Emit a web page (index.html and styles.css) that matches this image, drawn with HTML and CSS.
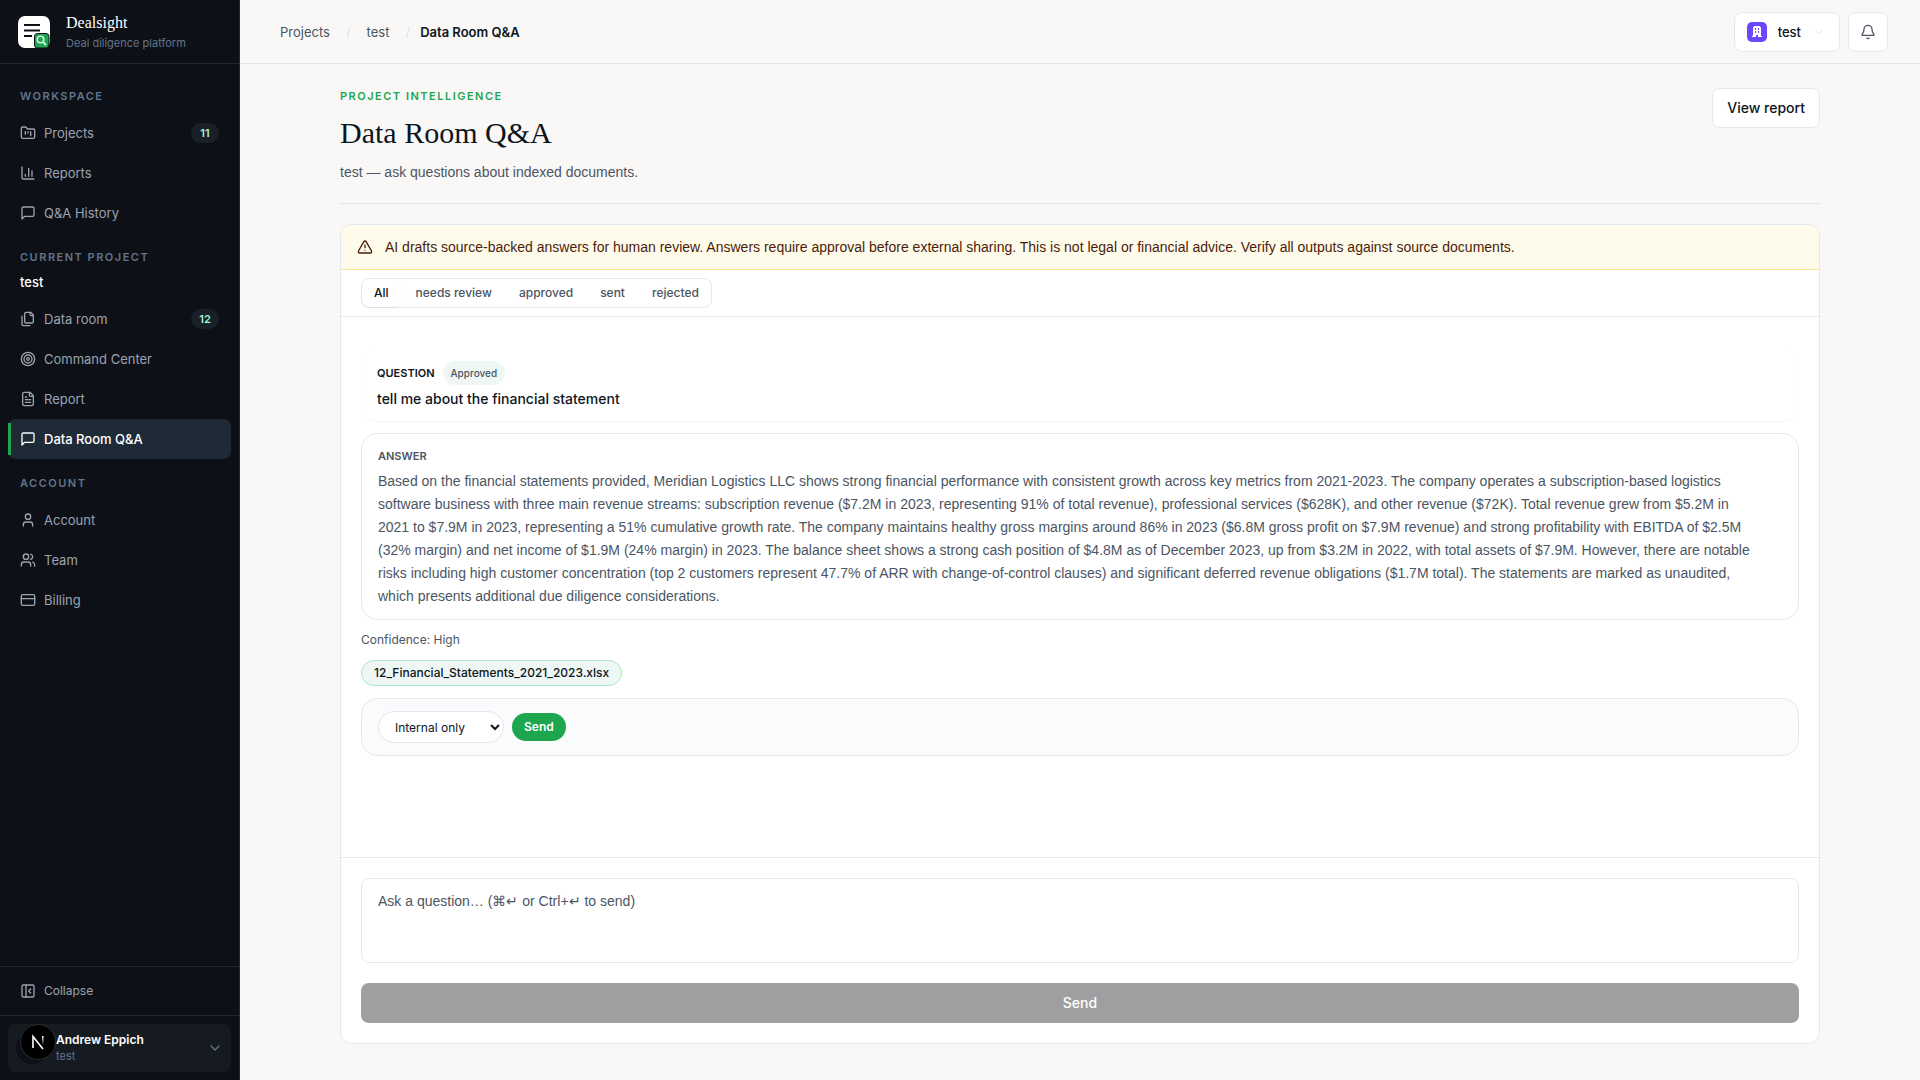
FILE: index.html
```html
<!DOCTYPE html>
<html lang="en">
<head>
    <meta charset="UTF-8">
    <meta name="viewport" content="width=device-width, initial-scale=1.0">
    <title>Data Room Q&amp;A - Dealsight</title>
    <link rel="stylesheet" href="styles.css">
</head>
<body>
    <div class="app">
        <aside class="sidebar">
            <div class="brand">
                <svg class="brand-logo" viewBox="0 0 32 32">
                    <rect x="0" y="0" width="32" height="32" rx="7" fill="#fff"/>
                    <path d="M6 9h16M6 14.500h16M6 20h8" stroke="#0d1117" stroke-width="2.200"/>
                    <rect x="16.500" y="17.500" width="14.500" height="14.500" rx="3" fill="#1ea64f" stroke="#0d1117" stroke-width="1"/>
                    <circle cx="22.500" cy="23.500" r="3.300" fill="none" stroke="#d3f5df" stroke-width="1.600"/>
                    <path d="M25 26l3 3" stroke="#d3f5df" stroke-width="1.800"/>
                </svg>
                <div>
                    <div class="brand-name">Dealsight</div>
                    <div class="brand-tag">Deal diligence platform</div>
                </div>
            </div>

            <nav class="nav">
                <div class="nav-label">Workspace</div>
                <a class="nav-item" href="#">
                    <svg class="icon" viewBox="0 0 24 24"><path d="M4 20h16a2 2 0 0 0 2-2V8a2 2 0 0 0-2-2h-7.930a2 2 0 0 1-1.660-.9l-.82-1.200A2 2 0 0 0 7.930 3H4a2 2 0 0 0-2 2v13c0 1.100.9 2 2 2Z"/><path d="M8 10v4M12 10v2M16 10v6"/></svg>
                    <span>Projects</span>
                    <span class="badge">11</span>
                </a>
                <a class="nav-item" href="#">
                    <svg class="icon" viewBox="0 0 24 24"><path d="M3 3v16a2 2 0 0 0 2 2h16M8 17v-3M13 17V5M18 17V9"/></svg>
                    <span>Reports</span>
                </a>
                <a class="nav-item" href="#">
                    <svg class="icon" viewBox="0 0 24 24"><path d="M21 15a2 2 0 0 1-2 2H7l-4 4V5a2 2 0 0 1 2-2h14a2 2 0 0 1 2 2z"/></svg>
                    <span>Q&amp;A History</span>
                </a>

                <div class="nav-label">Current project</div>
                <div class="nav-project">test</div>
                <a class="nav-item" href="#">
                    <svg class="icon" viewBox="0 0 24 24"><path d="M20 7h-3a2 2 0 0 1-2-2V2"/><path d="M9 18a2 2 0 0 1-2-2V4a2 2 0 0 1 2-2h7l4 4v10a2 2 0 0 1-2 2Z"/><path d="M3 7.600v12.800A1.600 1.600 0 0 0 4.600 22h9.800"/></svg>
                    <span>Data room</span>
                    <span class="badge">12</span>
                </a>
                <a class="nav-item" href="#">
                    <svg class="icon" viewBox="0 0 24 24"><circle cx="12" cy="12" r="10"/><circle cx="12" cy="12" r="6"/><circle cx="12" cy="12" r="2"/></svg>
                    <span>Command Center</span>
                </a>
                <a class="nav-item" href="#">
                    <svg class="icon" viewBox="0 0 24 24"><path d="M15 2H6a2 2 0 0 0-2 2v16a2 2 0 0 0 2 2h12a2 2 0 0 0 2-2V7Z"/><path d="M14 2v4a2 2 0 0 0 2 2h4M10 9H8M16 13H8M16 17H8"/></svg>
                    <span>Report</span>
                </a>
                <a class="nav-item active" href="#">
                    <svg class="icon" viewBox="0 0 24 24"><path d="M21 15a2 2 0 0 1-2 2H7l-4 4V5a2 2 0 0 1 2-2h14a2 2 0 0 1 2 2z"/></svg>
                    <span>Data Room Q&amp;A</span>
                </a>

                <div class="nav-label">Account</div>
                <a class="nav-item" href="#">
                    <svg class="icon" viewBox="0 0 24 24"><path d="M19 21v-2a4 4 0 0 0-4-4H9a4 4 0 0 0-4 4v2"/><circle cx="12" cy="7" r="4"/></svg>
                    <span>Account</span>
                </a>
                <a class="nav-item" href="#">
                    <svg class="icon" viewBox="0 0 24 24"><path d="M16 21v-2a4 4 0 0 0-4-4H6a4 4 0 0 0-4 4v2"/><circle cx="9" cy="7" r="4"/><path d="M22 21v-2a4 4 0 0 0-3-3.870M16 3.130a4 4 0 0 1 0 7.750"/></svg>
                    <span>Team</span>
                </a>
                <a class="nav-item" href="#">
                    <svg class="icon" viewBox="0 0 24 24"><rect x="2" y="4" width="20" height="16" rx="2"/><path d="M2 10h20"/></svg>
                    <span>Billing</span>
                </a>
            </nav>

            <div class="collapse">
                <button class="nav-item" type="button">
                    <svg class="icon" viewBox="0 0 24 24"><rect x="3" y="3" width="18" height="18" rx="2"/><path d="M9 3v18M16 15l-3-3 3-3"/></svg>
                    <span>Collapse</span>
                </button>
            </div>

            <div class="user">
                <button class="user-card" type="button">
                    <span class="avatar"></span>
                    <span class="user-text">
                        <span class="user-name">Andrew Eppich</span>
                        <span class="user-org">test</span>
                    </span>
                    <svg class="icon" viewBox="0 0 24 24"><path d="m6 9 6 6 6-6"/></svg>
                </button>
                <svg class="dev-badge" viewBox="0 0 36 36">
                    <defs>
                        <linearGradient id="stem" x1="0" y1="0" x2="0" y2="1">
                            <stop offset="0" stop-color="#fff"/>
                            <stop offset="1" stop-color="#fff" stop-opacity="0"/>
                        </linearGradient>
                    </defs>
                    <circle cx="18" cy="18" r="17.500" fill="#000" stroke="#2b2d31"/>
                    <path d="M13 24V12.500L23 25" fill="none" stroke="#fff" stroke-width="1.600"/>
                    <rect x="22" y="12" width="1.600" height="9" fill="url(#stem)"/>
                </svg>
            </div>
        </aside>

        <div class="main">
            <header class="topbar">
                <nav class="crumbs">
                    <a href="#">Projects</a>
                    <span class="slash">/</span>
                    <a href="#">test</a>
                    <span class="slash slash-last">/</span>
                    <span class="current">Data Room Q&amp;A</span>
                </nav>
                <div class="top-actions">
                    <button class="org-btn" type="button">
                        <svg class="org-logo" viewBox="0 0 20 20">
                            <rect width="20" height="20" rx="5" fill="#6c47ff"/>
                            <path fill="#fff" fill-rule="evenodd" d="M6 5h1V4h6v1h1v9h1v1h-4v-2H9v2H5v-1h1zM8 6v2h1V6zm3 0v2h1V6zM8 9v2h1V9zm3 0v2h1V9z"/>
                        </svg>
                        <span>test</span>
                        <svg class="icon icon-sm" viewBox="0 0 24 24"><path d="m6 9 6 6 6-6"/></svg>
                    </button>
                    <button class="bell-btn" type="button" aria-label="Notifications">
                        <svg class="icon" viewBox="0 0 24 24"><path d="M10.270 21a2 2 0 0 0 3.460 0"/><path d="M3.260 15.330A1 1 0 0 0 4 17h16a1 1 0 0 0 .74-1.670C19.410 13.960 18 12.500 18 8A6 6 0 0 0 6 8c0 4.500-1.410 5.960-2.740 7.330"/></svg>
                    </button>
                </div>
            </header>

            <main class="content">
                <div class="page-head">
                    <div>
                        <div class="eyebrow">Project intelligence</div>
                        <h1>Data Room Q&amp;A</h1>
                        <p class="subtitle">test — ask questions about indexed documents.</p>
                    </div>
                    <a class="report-btn" href="#">View report</a>
                </div>

                <section class="panel">
                    <div class="notice">
                        <svg class="icon" viewBox="0 0 24 24"><path d="m21.730 18-8-14a2 2 0 0 0-3.480 0l-8 14A2 2 0 0 0 4 21h16a2 2 0 0 0 1.730-3M12 9v4M12 17h.01"/></svg>
                        <span>AI drafts source-backed answers for human review. Answers require approval before external sharing. This is not legal or financial advice. Verify all outputs against source documents.</span>
                    </div>

                    <div class="filters">
                        <div class="tabs">
                            <button class="tab selected" type="button">All</button>
                            <button class="tab" type="button">needs review</button>
                            <button class="tab" type="button">approved</button>
                            <button class="tab" type="button">sent</button>
                            <button class="tab" type="button">rejected</button>
                        </div>
                    </div>

                    <div class="thread">
                        <div class="question">
                            <div class="question-head">
                                <span class="label">Question</span>
                                <span class="status">Approved</span>
                            </div>
                            <p>tell me about the financial statement</p>
                        </div>

                        <div class="answer">
                            <div class="label">Answer</div>
                            <p>
                                Based on the financial statements provided, Meridian Logistics LLC shows strong financial performance with consistent growth across key metrics from 2021-2023. The company operates a subscription-based logistics<br>
                                software business with three main revenue streams: subscription revenue ($7.2M in 2023, representing 91% of total revenue), professional services ($628K), and other revenue ($72K). Total revenue grew from $5.2M in<br>
                                2021 to $7.9M in 2023, representing a 51% cumulative growth rate. The company maintains healthy gross margins around 86% in 2023 ($6.8M gross profit on $7.9M revenue) and strong profitability with EBITDA of $2.5M<br>
                                (32% margin) and net income of $1.9M (24% margin) in 2023. The balance sheet shows a strong cash position of $4.8M as of December 2023, up from $3.2M in 2022, with total assets of $7.9M. However, there are notable<br>
                                risks including high customer concentration (top 2 customers represent 47.7% of ARR with change-of-control clauses) and significant deferred revenue obligations ($1.7M total). The statements are marked as unaudited,<br>
                                which presents additional due diligence considerations.
                            </p>
                        </div>

                        <div class="confidence">Confidence: High</div>
                        <a class="source" href="#">12_Financial_Statements_2021_2023.xlsx</a>

                        <form class="share">
                            <select class="share-select" aria-label="Audience">
                                <option>Internal only</option>
                            </select>
                            <button class="share-btn" type="button">Send</button>
                        </form>
                    </div>

                    <form class="composer">
                        <textarea aria-label="Question" placeholder="Ask a question… (⌘↵ or Ctrl+↵ to send)"></textarea>
                        <button class="send-btn" type="button" disabled>Send</button>
                    </form>
                </section>
            </main>
        </div>
    </div>
</body>
</html>
```

FILE: styles.css
```css
* {
    box-sizing: border-box;
}
body {
    margin: 0;
    font-family: Inter, "Liberation Sans", sans-serif;
    font-size: 14px;
    line-height: 20px;
    color: #0d1520;
    background: #f9f8f6;
}
button, select, textarea {
    font: inherit;
    color: inherit;
}
a {
    color: inherit;
    text-decoration: none;
}
h1, p {
    margin: 0;
}
.app {
    display: flex;
    min-height: 100vh;
}
.icon {
    flex: none;
    width: 16px;
    height: 16px;
    fill: none;
    stroke: currentColor;
    stroke-width: 2;
    stroke-linecap: round;
    stroke-linejoin: round;
}
.icon-sm {
    width: 14px;
    height: 14px;
}

/* Sidebar */
.sidebar {
    display: flex;
    flex-direction: column;
    flex: none;
    width: 240px;
    background: #0d1117;
    border-right: 1px solid #1f2a37;
    color: #9ca3af;
}
.brand {
    display: flex;
    align-items: center;
    gap: 16px;
    height: 64px;
    padding: 0 18px;
    border-bottom: 1px solid #23272e;
}
.brand-logo {
    width: 32px;
    height: 32px;
}
.brand-name {
    font-family: "Liberation Serif", serif;
    font-size: 16px;
    line-height: 22px;
    color: #fff;
}
.brand-tag {
    font-size: 11px;
    line-height: 18px;
    color: #64748b;
}
.nav {
    flex: 1;
    padding: 8px;
}
.nav-label {
    padding: 16px 12px 9px;
    font-size: 11px;
    line-height: 16px;
    font-weight: 600;
    letter-spacing: 1.5px;
    text-transform: uppercase;
    color: #64748b;
}
.nav-project {
    padding: 0 12px 9px;
    font-size: 13px;
    line-height: 16px;
    font-weight: 500;
    color: #fff;
}
.nav-item {
    display: flex;
    align-items: center;
    gap: 8px;
    width: 100%;
    height: 40px;
    padding: 0 12px;
    border: 0;
    border-radius: 8px;
    background: none;
    font-size: 13px;
    color: #9ca3af;
}
.nav-item.active {
    position: relative;
    background: #1f2a37;
    color: #fff;
    font-weight: 500;
}
.nav-item.active::before {
    content: "";
    position: absolute;
    left: 0;
    top: 4px;
    bottom: 4px;
    width: 3px;
    background: #1ea64f;
}
.badge {
    min-width: 28px;
    margin-left: auto;
    border-radius: 10px;
    background: #1a2027;
    font-size: 11px;
    font-weight: 600;
    text-align: center;
    color: #a7f3d0;
}
.collapse {
    padding: 4px 8px;
    border-top: 1px solid #23272e;
}
.collapse .nav-item {
    font-size: 12px;
}
.user {
    position: relative;
    padding: 8px;
    border-top: 1px solid #23272e;
}
.user-card {
    display: flex;
    align-items: center;
    gap: 8px;
    width: 100%;
    height: 48px;
    padding: 0 8px;
    border: 0;
    border-radius: 8px;
    background: #161b21;
    text-align: left;
    color: #64748b;
}
.avatar {
    width: 32px;
    height: 32px;
    border-radius: 50%;
    background: #0d1117;
}
.user-text {
    flex: 1;
}
.user-name {
    display: block;
    font-size: 12px;
    line-height: 16px;
    font-weight: 600;
    color: #fff;
}
.user-org {
    display: block;
    font-size: 11px;
    line-height: 16px;
}
.dev-badge {
    position: absolute;
    left: 20px;
    bottom: 20px;
    width: 36px;
    height: 36px;
}

/* Top bar */
.main {
    display: flex;
    flex-direction: column;
    flex: 1;
    min-width: 0;
}
.topbar {
    display: flex;
    align-items: center;
    justify-content: space-between;
    height: 64px;
    padding: 0 32px 0 40px;
    border-bottom: 1px solid #e2e4ea;
}
.crumbs {
    display: flex;
    align-items: center;
    font-size: 13px;
    color: #4b5563;
}
.slash {
    padding: 0 16px;
    color: #dfe3e8;
}
.slash-last {
    padding-right: 10px;
}
.current {
    font-weight: 600;
    color: #0d1520;
}
.top-actions {
    display: flex;
    gap: 8px;
}
.org-btn, .bell-btn, .report-btn {
    display: flex;
    align-items: center;
    height: 40px;
    border: 1px solid #e5e7eb;
    border-radius: 8px;
    background: #fff;
}
.org-btn {
    gap: 11px;
    padding: 0 13px 0 12px;
    font-size: 13px;
    font-weight: 500;
}
.org-logo {
    width: 20px;
    height: 20px;
}
.org-btn .icon {
    color: #eceef0;
}
.bell-btn {
    justify-content: center;
    width: 40px;
    padding: 0;
    color: #4b5563;
}

/* Page */
.content {
    display: flex;
    flex-direction: column;
    flex: 1;
    width: 100%;
    max-width: 1480px;
    margin: 0 auto;
    padding: 24px 0 36px;
}
.page-head {
    display: flex;
    align-items: flex-start;
    justify-content: space-between;
    padding-bottom: 20px;
    margin-bottom: 20px;
    border-bottom: 1px solid #e2e4ea;
}
.eyebrow {
    font-size: 11px;
    line-height: 16px;
    font-weight: 600;
    letter-spacing: 1.5px;
    text-transform: uppercase;
    color: #1ea64f;
}
h1 {
    padding: 8px 0;
    font-family: "Liberation Serif", serif;
    font-size: 30px;
    line-height: 41px;
    font-weight: 400;
}
.subtitle {
    line-height: 22px;
    color: #4b5563;
}
.subtitle, .notice, .answer p, .composer textarea {
    font-family: "Liberation Sans", sans-serif;
}
.report-btn {
    padding: 0 14px;
    font-weight: 500;
}
.panel {
    display: flex;
    flex-direction: column;
    flex: 1;
    overflow: hidden;
    border: 1px solid #e2e8f0;
    border-radius: 12px;
    background: #fff;
}
.notice {
    display: flex;
    align-items: center;
    gap: 12px;
    padding: 12px 16px;
    border-bottom: 1px solid #fbe58c;
    background: #fffbeb;
    color: #4a1d0a;
}
.filters {
    display: flex;
    padding: 8px 20px;
    border-bottom: 1px solid #e5e7eb;
}
.tabs {
    display: flex;
    gap: 3px;
    border: 1px solid #e5e7eb;
    border-radius: 8px;
}
.tab {
    height: 28px;
    padding: 0 12px;
    border: 0;
    border-radius: 8px;
    background: none;
    font-size: 12px;
    font-weight: 500;
    color: #4b5563;
}
.tab.selected {
    color: #0d1520;
    box-shadow: 0 1px 2px rgba(0, 0, 0, 0.05);
}

/* Thread */
.thread {
    flex: 1;
    padding: 32px 20px;
}
.question {
    padding: 12px 16px;
    border-radius: 16px;
    box-shadow: 0 1px 2px rgba(0, 0, 0, 0.05);
}
.question-head {
    display: flex;
    align-items: center;
    gap: 8px;
    margin-bottom: 4px;
}
.label {
    font-size: 11px;
    line-height: 16px;
    font-weight: 600;
    text-transform: uppercase;
}
.status {
    padding: 2px 8px;
    border-radius: 12px;
    background: #eff7f4;
    font-size: 10px;
    font-weight: 500;
    color: #4b5563;
}
.question p {
    font-weight: 500;
}
.answer {
    margin-top: 12px;
    padding: 14px 16px 11px;
    border: 1px solid #e5e7eb;
    border-radius: 16px;
    color: #4b5563;
}
.answer p {
    margin-top: 6px;
    line-height: 23px;
}
.confidence {
    margin: 10px 0;
    font-size: 12px;
    color: #4b5563;
}
.source {
    display: inline-block;
    padding: 2px 12px;
    border: 1px solid #a7e8c4;
    border-radius: 14px;
    background: #eff7f4;
    font-size: 12px;
    font-weight: 500;
}
.share {
    display: flex;
    align-items: center;
    gap: 8px;
    margin-top: 12px;
    padding: 12px 16px;
    border: 1px solid #e5e7eb;
    border-radius: 16px;
    background: #fafbfd;
}
.share-select {
    width: 126px;
    height: 32px;
    padding: 0 0 0 12px;
    border: 1px solid #e5e7eb;
    border-radius: 16px;
    background: #fff;
    font-size: 12px;
}
.share-btn {
    height: 28px;
    padding: 0 12px;
    border: 0;
    border-radius: 14px;
    background: #1ea64f;
    font-size: 12px;
    font-weight: 600;
    color: #fff;
}

/* Composer */
.composer {
    display: flex;
    flex-direction: column;
    gap: 20px;
    padding: 20px;
    border-top: 1px solid #e5e7eb;
}
.composer textarea {
    display: block;
    height: 85px;
    padding: 12px 16px;
    border: 1px solid #e5e7eb;
    border-radius: 8px;
    background: #fff;
    resize: none;
}
.composer textarea::placeholder {
    color: #4b5563;
}
.send-btn {
    height: 40px;
    border: 0;
    border-radius: 8px;
    background: #9e9fa0;
    font-weight: 500;
    color: #fff;
}
```
